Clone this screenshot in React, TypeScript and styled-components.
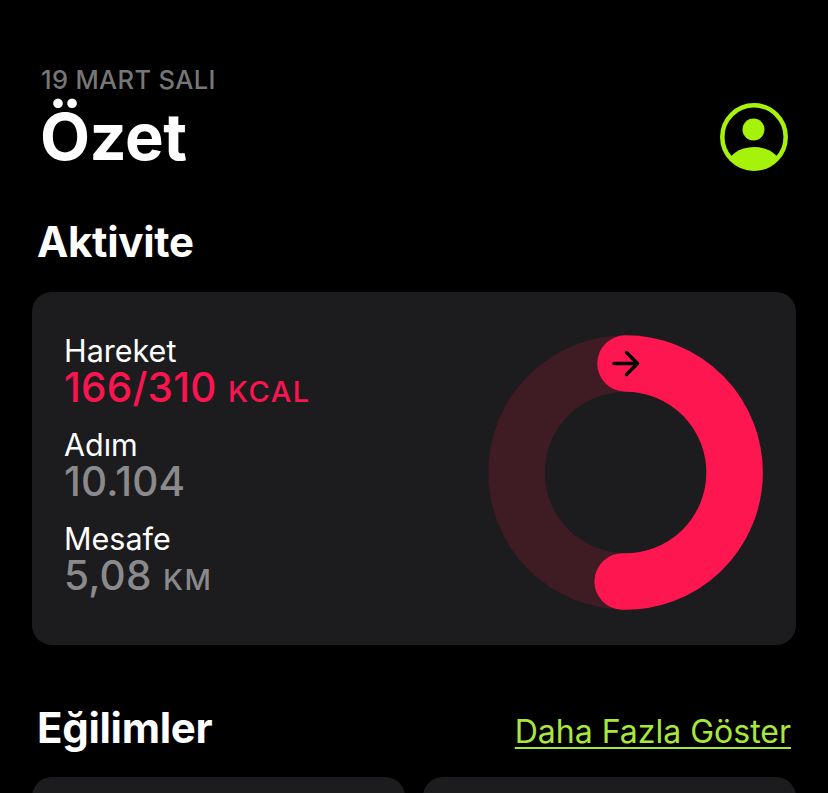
import React from "react";
import styled, { createGlobalStyle } from "styled-components";

const GlobalStyle = createGlobalStyle`
  html, body {
    margin: 0;
    padding: 0;
    background: #000;
  }
  body {
    font-family: Inter, "Liberation Sans", sans-serif;
    -webkit-font-smoothing: antialiased;
  }
`;

const Page = styled.main`
  width: 828px;
  height: 793px;
  overflow: hidden;
  box-sizing: border-box;
  padding: 67px 32px 0;
  background: #000;
  color: #fff;
`;

const Header = styled.header`
  display: flex;
  justify-content: space-between;
  align-items: flex-end;
  padding: 0 8px 0 8px;
`;

const DateLabel = styled.div`
  padding-left: 1px;
  font-size: 25.5px;
  line-height: 26px;
  font-weight: 500;
  letter-spacing: 0.35px;
  color: #777;
`;

const Title = styled.h1`
  margin: 6px 0 0;
  font-size: 65px;
  line-height: 76px;
  font-weight: 700;
  letter-spacing: -0.5px;
`;

const ProfileIcon = styled.svg`
  display: block;
  width: 68px;
  height: 68px;
  margin-bottom: 4px;
`;

const SectionHeading = styled.h2`
  margin: 0;
  font-size: 42px;
  line-height: 50px;
  font-weight: 700;
  letter-spacing: -0.3px;
`;

const ActivityHeading = styled(SectionHeading)`
  margin: 42px 0 25px 5px;
`;

const ActivityCard = styled.section`
  display: flex;
  justify-content: space-between;
  height: 353px;
  box-sizing: border-box;
  padding: 42px 33px 0 32px;
  border-radius: 20px;
  background: #1c1c1e;
`;

const Stats = styled.div`
  display: flex;
  flex-direction: column;
  gap: 20px;
`;

const Stat = styled.div`
  display: flex;
  flex-direction: column;
`;

const StatLabel = styled.div`
  font-size: 30.5px;
  line-height: 34px;
  font-weight: 400;
  color: #fff;
`;

const StatValue = styled.div<{ $color: string }>`
  height: 40px;
  font-size: 40.5px;
  line-height: 40px;
  font-weight: 500;
  letter-spacing: 0.2px;
  color: ${(p) => p.$color};
`;

const StatUnit = styled.span`
  margin-left: 2px;
  font-size: 29px;
  line-height: 1;
  font-weight: 500;
  letter-spacing: 1.6px;
`;

const Ring = styled.svg`
  display: block;
  flex: none;
  width: 275px;
  height: 275px;
  margin-top: 1px;
`;

const TrendsHeader = styled.div`
  display: flex;
  justify-content: space-between;
  align-items: flex-start;
  margin: 58px 5px 20px 5px;
`;

const MoreLink = styled.a`
  margin-top: 4px;
  font-size: 32px;
  line-height: 50px;
  font-weight: 400;
  color: #a8e83a;
  text-decoration: underline;
  text-decoration-thickness: 2px;
  text-underline-offset: 4px;
`;

const TrendGrid = styled.div`
  display: grid;
  grid-template-columns: 1fr 1fr;
  gap: 18px;
`;

const TrendCard = styled.div`
  height: 200px;
  border-radius: 20px;
  background: #1c1c1e;
`;

const stats = [
  { label: "Hareket", value: "166/310", unit: "KCAL", color: "#fa1450" },
  { label: "Adım", value: "10.104", color: "#8a8a8d" },
  { label: "Mesafe", value: "5,08", unit: "KM", color: "#8a8a8d" },
];

const App: React.FC = () => {
  return (
    <Page>
      <GlobalStyle />
      <Header>
        <div>
          <DateLabel>19 MART SALI</DateLabel>
          <Title>Özet</Title>
        </div>
        <ProfileIcon viewBox="0 0 68 68">
          <defs>
            <clipPath id="profile-clip">
              <circle cx="34" cy="34" r="32" />
            </clipPath>
          </defs>
          <circle cx="34" cy="34" r="31.7" fill="none" stroke="#a6f20a" strokeWidth="4.5" />
          <circle cx="33.5" cy="26.5" r="11" fill="#a6f20a" />
          <ellipse cx="34" cy="64" rx="27" ry="20" fill="#a6f20a" clipPath="url(#profile-clip)" />
        </ProfileIcon>
      </Header>

      <ActivityHeading>Aktivite</ActivityHeading>
      <ActivityCard>
        <Stats>
          {stats.map((s) => (
            <Stat key={s.label}>
              <StatLabel>{s.label}</StatLabel>
              <StatValue $color={s.color}>
                {s.value}
                {s.unit && <StatUnit> {s.unit}</StatUnit>}
              </StatValue>
            </Stat>
          ))}
        </Stats>
        <Ring viewBox="0 0 275 275">
          <circle cx="137.5" cy="137.5" r="109" fill="none" stroke="#3f1b24" strokeWidth="56.5" />
          <path
            d="M137.5 28.5 A109 109 0 1 1 134.65 246.46"
            fill="none"
            stroke="#fe1650"
            strokeWidth="56.5"
            strokeLinecap="round"
          />
          <path
            d="M126 28.5 H149 M138.5 17.5 L149.5 28.5 L138.5 39.5"
            fill="none"
            stroke="#000"
            strokeWidth="3.5"
            strokeLinecap="round"
            strokeLinejoin="round"
          />
        </Ring>
      </ActivityCard>

      <TrendsHeader>
        <SectionHeading>Eğilimler</SectionHeading>
        <MoreLink>Daha Fazla Göster</MoreLink>
      </TrendsHeader>
      <TrendGrid>
        <TrendCard />
        <TrendCard />
      </TrendGrid>
    </Page>
  );
};

export default App;
